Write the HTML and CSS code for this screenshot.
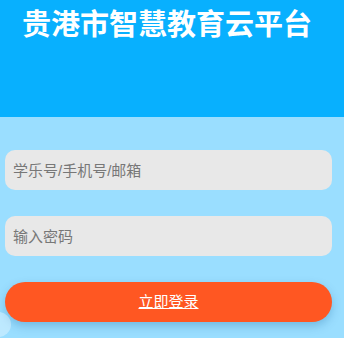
FILE: index.html
```html
<!DOCTYPE html>
<html lang="zh-CN">
<head>
    <meta charset="UTF-8">
    <meta name="viewport" content="width=device-width, initial-scale=1.0">
    <title>贵港市智慧教育云平台</title>
    <link rel="stylesheet" href="styles.css">
</head>
<body>
    <div class="denglu-fejlec">
        <h1>贵港市智慧教育云平台</h1>
    </div>
    <div class="denglu-urlap">
        <input type="text" class="mezo" placeholder="学乐号/手机号/邮箱">
        <input type="password" class="mezo" placeholder="输入密码">
        <a href="#" class="gomb">立即登录</a>
    </div>
    <div class="kor"></div>
</body>
</html>
```

FILE: styles.css
```css
body {
    font-family: "Liberation Sans", "Noto Sans CJK SC", sans-serif;
    background-color: #9adeff;
    margin: 0;
    height: 338px;
    overflow: hidden;
    position: relative;
}
.denglu-fejlec {
    background-color: #08b0fe;
    height: 117px;
    padding-left: 22px;
}
.denglu-fejlec h1 {
    margin: 0;
    padding-top: 7px;
    font-size: 29px;
    line-height: 36px;
    font-weight: bold;
    color: white;
}
.denglu-urlap {
    display: flex;
    flex-direction: column;
    gap: 26px;
    padding: 33px 12px 0 5px;
}
.mezo {
    height: 40px;
    box-sizing: border-box;
    border: none;
    border-radius: 10px;
    background-color: #e8e8e8;
    padding: 0 8px;
    font-family: inherit;
    font-size: 15px;
    outline: none;
}
.mezo::placeholder {
    color: #777;
}
.gomb {
    height: 40px;
    line-height: 40px;
    border-radius: 20px;
    background-color: #ff5722;
    color: white;
    text-align: center;
    font-size: 15px;
    box-shadow: 0 4px 10px rgba(0, 80, 140, 0.25);
}
.kor {
    position: absolute;
    left: -14px;
    top: 312px;
    width: 25px;
    height: 25px;
    border-radius: 50%;
    background: rgba(255, 255, 255, 0.35);
}
```
